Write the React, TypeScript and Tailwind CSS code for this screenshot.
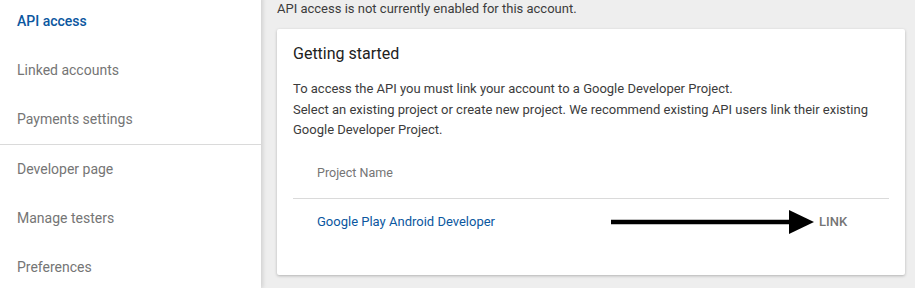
import React from 'react'

const NavItem = ({ label, active }: { label: string; active?: boolean }) => (
  <div
    className={`h-[49px] flex items-center pl-[17px] text-[14px] ${
      active ? 'text-[#0b57a0] font-medium' : 'text-[#757575]'
    }`}
  >
    {label}
  </div>
)

const Arrow = () => (
  <svg width="204" height="26" viewBox="0 0 204 26" className="block">
    <line x1="0" y1="13" x2="180" y2="13" stroke="#000" strokeWidth="4.5" />
    <polygon points="178,1 203,13 178,25" fill="#000" />
  </svg>
)

export default function App() {
  return (
    <div
      className="flex w-[915px] h-[288px] bg-[#eeeeee] overflow-hidden"
      style={{ fontFamily: 'Roboto, "Noto Sans", sans-serif' }}
    >
      <aside className="w-[261px] shrink-0 bg-white shadow-[2px_0_4px_rgba(0,0,0,0.12)] z-10 -mt-[3px]">
        <NavItem label="API access" active />
        <NavItem label="Linked accounts" />
        <NavItem label="Payments settings" />
        <div className="h-px bg-[#dadada]" />
        <NavItem label="Developer page" />
        <NavItem label="Manage testers" />
        <NavItem label="Preferences" />
      </aside>

      <main className="flex-1 pl-[16px] pr-[10px]">
        <p className="text-[13px] text-[#3c3c3c] leading-[20px] -mt-[1px]">
          API access is not currently enabled for this account.
        </p>
        <section className="mt-[10px] bg-white rounded-[2px] shadow-[0_1px_3px_rgba(0,0,0,0.25)] w-[628px] h-[246px] px-[16px]">
          <h2 className="pt-[14px] text-[16px] leading-[22px] text-[#212121]">Getting started</h2>
          <p className="mt-[14px] text-[13px] leading-[20.5px] text-[#3c3c3c]">
            To access the API you must link your account to a Google Developer Project.
            <br />
            Select an existing project or create new project. We recommend existing API users link their existing
            Google Developer Project.
          </p>
          <div className="mt-[22px] pl-[24px] h-[35px] text-[12.5px] text-[#757575] leading-[20px]">
            Project Name
          </div>
          <div className="h-px bg-[#dadada] w-[596px]" />
          <div className="flex items-center h-[46px] pl-[24px]">
            <span className="text-[13px] text-[#0b57a0] w-[294px]">Google Play Android Developer</span>
            <Arrow />
            <span className="ml-[4px] text-[13px] font-medium text-[#757575]">LINK</span>
          </div>
        </section>
      </main>
    </div>
  )
}
